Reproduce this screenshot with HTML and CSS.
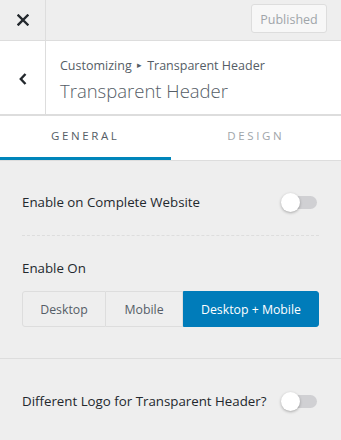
FILE: index.html
```html
<!DOCTYPE html>
<html lang="en">
<head>
    <meta charset="UTF-8">
    <meta name="viewport" content="width=device-width, initial-scale=1.0">
    <title>Transparent Header</title>
    <link rel="stylesheet" href="styles.css">
</head>
<body>
    <div class="sidebar">
        <div class="topbar">
            <button class="close-btn" aria-label="Close">
                <svg width="12" height="12" viewBox="0 0 12 12"><path d="M1.5 1.5l9 9M10.5 1.5l-9 9" stroke="#23282d" stroke-width="2.4" stroke-linecap="square"/></svg>
            </button>
            <div class="topbar-actions">
                <button class="publish-btn" disabled>Published</button>
            </div>
        </div>

        <div class="section-head">
            <button class="back-btn" aria-label="Back">
                <svg width="8" height="12" viewBox="0 0 8 12"><path d="M6.5 1L1.8 6l4.7 5" fill="none" stroke="#23282d" stroke-width="2.4"/></svg>
            </button>
            <div class="section-title">
                <span class="crumb">Customizing <span class="crumb-arrow">&#9656;</span> Transparent Header</span>
                <h3>Transparent Header</h3>
            </div>
        </div>

        <div class="tabs">
            <div class="tab active">General</div>
            <div class="tab">Design</div>
        </div>

        <div class="controls">
            <div class="control toggle-row dashed">
                <span class="label">Enable on Complete Website</span>
                <span class="switch"></span>
            </div>

            <div class="control">
                <span class="label">Enable On</span>
                <div class="btn-group">
                    <button class="seg seg-desktop">Desktop</button>
                    <button class="seg seg-mobile">Mobile</button>
                    <button class="seg seg-both active">Desktop + Mobile</button>
                </div>
            </div>

            <div class="control toggle-row bordered">
                <span class="label">Different Logo for Transparent Header?</span>
                <span class="switch"></span>
            </div>
        </div>
    </div>
</body>
</html>
```

FILE: styles.css
```css
body {
    margin: 0;
    font-family: "Open Sans", "Noto Sans", sans-serif;
    background-color: #eee;
    color: #23282d;
}

.sidebar {
    width: 341px;
    height: 440px;
    overflow: hidden;
}

button {
    font-family: inherit;
}

/* top bar with close + publish */
.topbar {
    display: flex;
    height: 40px;
    border-bottom: 1px solid #ddd;
    background-color: #eee;
}

.close-btn,
.back-btn {
    width: 46px;
    border: none;
    border-right: 1px solid #ddd;
    background: none;
    display: flex;
    align-items: center;
    justify-content: center;
    padding: 0;
}

.topbar-actions {
    flex: 1;
    display: flex;
    justify-content: flex-end;
    align-items: flex-start;
    padding: 4px 14px 0 0;
}

.publish-btn {
    width: 76px;
    height: 29px;
    border: 1px solid #ddd;
    border-radius: 3px;
    background-color: #f7f7f7;
    color: #a0a5aa;
    font-size: 12.5px;
    padding: 2px 0 0;
}

/* section heading */
.section-head {
    display: flex;
    height: 73px;
    background-color: #fff;
    border-bottom: 2px solid #ddd;
}

.back-btn {
    padding-top: 2px;
}

.section-title {
    padding: 14px 0 0 14px;
}

.crumb {
    display: block;
    font-size: 12.5px;
    color: #555d66;
    line-height: 20px;
}

.crumb-arrow {
    font-size: 9px;
    vertical-align: 2px;
    margin: 0 2px;
}

.section-title h3 {
    margin: 2px 0 0;
    font-size: 18.5px;
    font-weight: 300;
    line-height: 26px;
    color: #555d66;
}

/* tabs */
.tabs {
    display: flex;
    background-color: #fff;
    border-bottom: 1px solid #ddd;
}

.tab {
    flex: 1;
    height: 41px;
    line-height: 40px;
    text-align: center;
    text-transform: uppercase;
    letter-spacing: 2.6px;
    font-size: 11.5px;
    color: #a0a5aa;
    border-bottom: 3px solid transparent;
}

.tab.active {
    color: #555d66;
    border-bottom-color: #0085ba;
}

/* controls */
.controls {
    padding: 0 22px;
}

.control {
    padding: 20px 0;
}

.label {
    font-size: 13.3px;
    font-weight: 500;
    color: #23282d;
}

.toggle-row {
    display: flex;
    align-items: center;
    justify-content: space-between;
}

.controls .control:first-child {
    padding-top: 32px;
    padding-bottom: 24px;
}

.dashed {
    border-bottom: 1px dashed #ddd;
}

.bordered {
    margin: 11px -22px 0;
    padding: 33px 22px 20px;
    border-top: 1px solid #ddd;
}

.switch {
    position: relative;
    width: 33px;
    height: 13px;
    margin-right: 2px;
    border-radius: 7px;
    background-color: #d0d0d3;
}

.switch::before {
    content: "";
    position: absolute;
    left: -3px;
    top: -3px;
    width: 19px;
    height: 19px;
    border-radius: 50%;
    background-color: #fff;
    box-shadow: 0 1px 3px rgba(0, 0, 0, 0.3);
}

.btn-group {
    display: flex;
    margin-top: 13px;
}

.seg {
    height: 36px;
    border: 1px solid #ddd;
    background-color: #eee;
    color: #555d66;
    font-size: 12.3px;
    padding: 0;
}

.seg-desktop {
    width: 84px;
    border-radius: 3px 0 0 3px;
}

.seg-mobile {
    width: 77px;
    border-left: none;
}

.seg-both {
    flex: 1;
    border-radius: 0 3px 3px 0;
}

.seg.active {
    background-color: #007cba;
    border-color: #007cba;
    color: #fff;
}
```
